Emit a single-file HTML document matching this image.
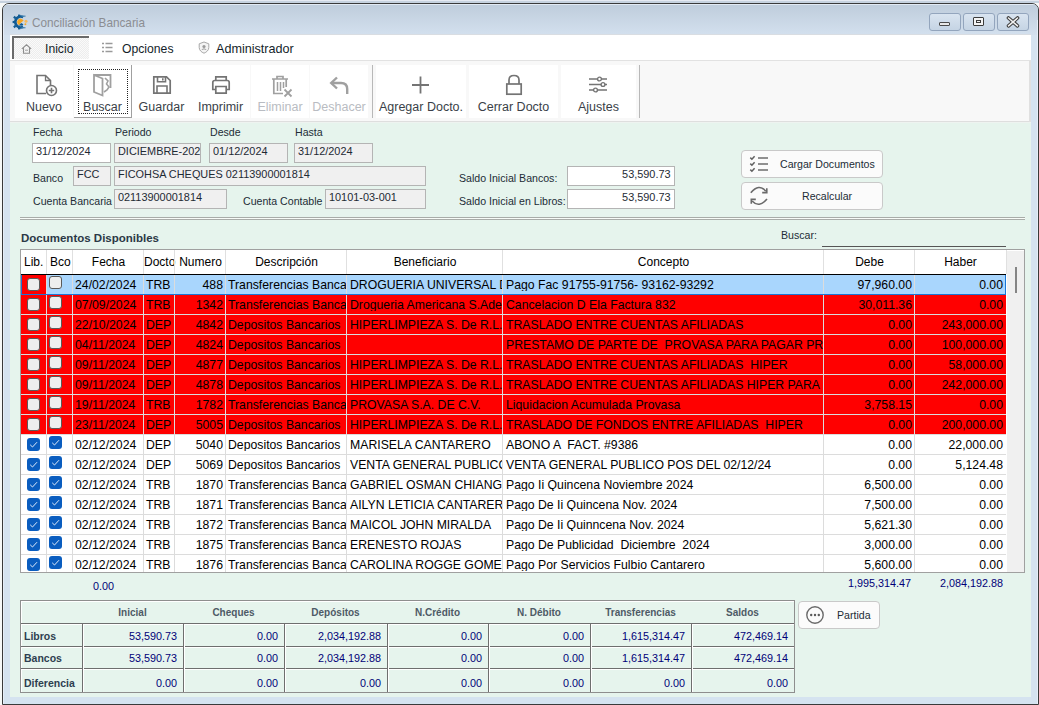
<!DOCTYPE html><html><head><meta charset="utf-8"><style>
*{box-sizing:border-box;margin:0;padding:0}
html,body{width:1039px;height:705px;overflow:hidden;background:#f7f9f8;font-family:"Liberation Sans",sans-serif;}
.ab{position:absolute}
.t{position:absolute;white-space:nowrap;line-height:1}
.lbl{position:absolute;white-space:nowrap;line-height:1;font-size:10.6px;color:#222c36}
.tb{position:absolute;border:1px solid #b4b4b4;background:#f0f0f0;overflow:hidden}
.tb span{position:absolute;white-space:nowrap;line-height:1;font-size:11.6px;color:#1e2a34}
.tbtn{position:absolute;top:65px;height:53px;background:#ffffff}
.tbl{position:absolute;top:101px;font-size:12.5px;line-height:1;white-space:nowrap;color:#3a3f48;text-align:center}
.cell{position:absolute;overflow:hidden;white-space:pre;line-height:1;font-size:12.25px;color:#000}
.cb{position:absolute;width:13px;height:13px;border-radius:3px}
.cbu{background:#eeeeee;border:1px solid #5a5a5a}
.cbc{background:#0a5dbf}
.sv{position:absolute;white-space:nowrap;line-height:1;font-size:10.8px;color:#000078;text-align:right}
.sh{position:absolute;white-space:nowrap;line-height:1;font-size:10px;font-weight:bold;color:#4e5a66;text-align:center}
.sl{position:absolute;white-space:nowrap;line-height:1;font-size:10.5px;font-weight:bold;color:#2e3e50}

</style></head><body>
<div class="ab" style="left:0;top:0;width:1039px;height:3px;background:linear-gradient(#e6eaf2 0 1px,#c6d2df 1px)"></div>
<div class="ab" style="left:2px;top:3px;width:1037px;height:702px;border:1px solid #3a3a3a;border-radius:7px 7px 0 0;background:#d5e3f0"></div>
<div class="ab" style="left:3px;top:4px;width:1035px;height:31px;border-radius:6px 6px 0 0;background:linear-gradient(#e2eaf4 0 1px,#bfcddc 1px,#d3e0ee)"></div>
<div class="ab" style="left:3px;top:20px;width:1px;height:684px;background:#e6eef8"></div>
<div class="ab" style="left:1037px;top:20px;width:1px;height:684px;background:#e6eef8"></div>
<svg class="ab" style="left:12px;top:14px" width="17" height="16" viewBox="0 0 17 16">
<path d="M11.2 3.2 A5.4 5.4 0 1 0 11.2 12.8" fill="none" stroke="#125c94" stroke-width="2.6"/>
<g fill="#125c94">
<rect x="6" y="0.6" width="2.2" height="2.4"/><rect x="6" y="13" width="2.2" height="2.4"/>
<rect x="0.6" y="6.9" width="2.4" height="2.2"/>
<rect x="1.6" y="2.3" width="2.2" height="2.2" transform="rotate(45 2.7 3.4)"/>
<rect x="1.6" y="11.5" width="2.2" height="2.2" transform="rotate(45 2.7 12.6)"/>
</g>
<path d="M7.3 11.2 A3.4 3.4 0 1 1 11.6 6.6 L8.6 9 Z" fill="#f5a623"/>
<path d="M6.8 11.6 L9.2 9 L11.4 10.2 L10.4 11.8 Z" fill="#125c94"/>
<rect x="9.5" y="1.6" width="4" height="1.1" fill="#3f7fb0"/><rect x="9.5" y="13.2" width="4" height="1.1" fill="#3f7fb0"/>
<circle cx="14" cy="7.2" r="1.5" fill="#f7b85a"/><circle cx="13.4" cy="10.3" r="1" fill="#f5a623"/>
</svg>
<div class="t" style="left:32px;top:17px;font-size:12.4px;color:#8b8d92;transform:scaleX(0.948);transform-origin:0 0">Conciliación Bancaria</div>
<div class="ab" style="left:929px;top:13px;width:32px;height:18px;border:1px solid #93a5bd;border-radius:3px;background:linear-gradient(#d9e4f0,#c5d4e4)"></div>
<div class="ab" style="left:963px;top:13px;width:32px;height:18px;border:1px solid #93a5bd;border-radius:3px;background:linear-gradient(#d9e4f0,#c5d4e4)"></div>
<div class="ab" style="left:997px;top:13px;width:32px;height:18px;border:1px solid #93a5bd;border-radius:3px;background:linear-gradient(#d9e4f0,#c5d4e4)"></div>
<div class="ab" style="left:939px;top:22px;width:11px;height:4px;border:1px solid #4a4a4a;border-radius:1px;background:#e8e8e8"></div>
<div class="ab" style="left:973px;top:17px;width:11px;height:9px;border:1px solid #3c3c3c;border-radius:1px;background:#f4f4f4"></div>
<div class="ab" style="left:976px;top:20px;width:5px;height:3px;border:1px solid #3c3c3c"></div>
<svg class="ab" style="left:1006px;top:16px" width="14" height="12" viewBox="0 0 14 12">
<path d="M2.5 2 L11.5 9.8 M11.5 2 L2.5 9.8" stroke="#3a3a3a" stroke-width="3.6" stroke-linecap="round"/>
<path d="M2.5 2 L11.5 9.8 M11.5 2 L2.5 9.8" stroke="#f2f2f2" stroke-width="1.6" stroke-linecap="round"/>
</svg>
<div class="ab" style="left:10px;top:34px;width:1021px;height:1px;background:#d9dde2"></div>
<div class="ab" style="left:10px;top:35px;width:1021px;height:26px;background:#fff;border-bottom:1px solid #e2e2e2"></div>
<div class="ab" style="left:12px;top:36px;width:77px;height:23px;border-top:2px solid #6a6a6a;border-left:2px solid #6a6a6a;background:repeating-conic-gradient(#ededed 0 25%,#fafafa 0 50%) 0 0/2px 2px"></div>
<svg class="ab" style="left:21px;top:44px" width="11" height="10" viewBox="0 0 11 10">
<path d="M0.8 4.8 L5.5 0.8 L10.2 4.8 M2.5 3.6 L2.5 9.2 L8.5 9.2 L8.5 3.6" stroke="#8e8e8e" stroke-width="1.1" fill="none"/><path d="M4 6.2 H7" stroke="#a0a0a0" stroke-width="1"/>
</svg>
<div class="t" style="left:45px;top:43px;font-size:12.2px;color:#141e2a">Inicio</div>
<svg class="ab" style="left:101px;top:42px" width="12" height="11" viewBox="0 0 12 11">
<path d="M1 1.5h2M1 5.5h2M1 9.5h2M4.5 1.5h7M4.5 5.5h7M4.5 9.5h7" stroke="#9a9a9a" stroke-width="1.3"/>
</svg>
<div class="t" style="left:122px;top:43px;font-size:12.2px;color:#141e2a">Opciones</div>
<svg class="ab" style="left:198px;top:41px" width="12" height="13" viewBox="0 0 12 13">
<path d="M6 1 L10.8 2.8 L10.8 6.5 C10.8 9.3 8.5 11.2 6 12.2 C3.5 11.2 1.2 9.3 1.2 6.5 L1.2 2.8 Z" fill="#f4f4f4" stroke="#a8a8a8" stroke-width="1"/>
<circle cx="6" cy="5.5" r="1.6" fill="#9a9a9a"/><path d="M3.8 9 C4.3 7.5 7.7 7.5 8.2 9" stroke="#9a9a9a" fill="none"/>
</svg>
<div class="t" style="left:216px;top:43px;font-size:12.6px;color:#141e2a">Administrador</div>
<div class="ab" style="left:10px;top:61px;width:1021px;height:61px;background:#f8f8f8;border-bottom:1px solid #dedede"></div>
<div class="ab" style="left:1029px;top:61px;width:2px;height:61px;background:#e0e0e0"></div>
<div class="tbtn" style="left:15px;width:58px"></div>
<div class="tbtn" style="left:74px;width:57px"></div>
<div class="tbtn" style="left:132px;width:59px"></div>
<div class="tbtn" style="left:191px;width:59px"></div>
<div class="tbtn" style="left:251px;width:58px"></div>
<div class="tbtn" style="left:310px;width:58px"></div>
<div class="tbtn" style="left:376px;width:90px"></div>
<div class="tbtn" style="left:469px;width:89px"></div>
<div class="tbtn" style="left:561px;width:75px"></div>
<div class="ab" style="left:74px;top:65px;width:58px;height:53px;background:#fff;border-right:1px solid #a0a0a0;border-bottom:1px solid #a0a0a0"></div>
<div class="ab" style="left:78px;top:69px;width:50px;height:45px;border:1px dotted #222"></div>
<div class="tbl" style="left:5px;width:78px;color:#3a3f48">Nuevo</div>
<div class="tbl" style="left:64px;width:77px;color:#3a3f48">Buscar</div>
<div class="tbl" style="left:122px;width:79px;color:#3a3f48">Guardar</div>
<div class="tbl" style="left:181px;width:79px;color:#3a3f48">Imprimir</div>
<div class="tbl" style="left:241px;width:78px;color:#b9bcc2">Eliminar</div>
<div class="tbl" style="left:300px;width:78px;color:#b9bcc2">Deshacer</div>
<div class="tbl" style="left:366px;width:110px;color:#3a3f48">Agregar Docto.</div>
<div class="tbl" style="left:459px;width:109px;color:#3a3f48">Cerrar Docto</div>
<div class="tbl" style="left:551px;width:95px;color:#3a3f48">Ajustes</div>
<div class="ab" style="left:372px;top:65px;width:1px;height:53px;background:#b8b8b8"></div>
<div class="ab" style="left:639px;top:65px;width:1px;height:53px;background:#b8b8b8"></div>
<svg class="ab" style="left:35px;top:74px" width="23" height="23" viewBox="0 0 23 23">
<path d="M11 19.5 L2 19.5 L2 1.5 L10.5 1.5 L15.5 6.5 L15.5 11" fill="none" stroke="#747474" stroke-width="1.6"/>
<path d="M10.5 1.5 L10.5 6.5 L15.5 6.5" fill="none" stroke="#747474" stroke-width="1.3"/>
<circle cx="16.5" cy="16.5" r="5" fill="#fff" stroke="#747474" stroke-width="1.6"/>
<path d="M16.5 13.8 V19.2 M13.8 16.5 H19.2" stroke="#747474" stroke-width="1.6"/>
</svg>
<svg class="ab" style="left:92px;top:73px" width="21" height="24" viewBox="0 0 21 24">
<path d="M2 2 L18.5 2 L18.5 15" fill="none" stroke="#a0a0a0" stroke-width="1.8"/>
<path d="M2 2 L2 19 L10.5 22.5 L10.5 5.5 Z" fill="none" stroke="#a0a0a0" stroke-width="1.8"/>
<path d="M13 5 L16 8 L14.5 11 L17 14 L15 17 L12 19" fill="none" stroke="#a0a0a0" stroke-width="1.6"/>
</svg>
<svg class="ab" style="left:152px;top:75px" width="20" height="20" viewBox="0 0 20 20">
<path d="M1.8 1.8 H14.5 L18.2 5.5 V18.2 H1.8 Z" fill="none" stroke="#747474" stroke-width="1.7"/>
<path d="M5.5 1.8 V6.8 H13.5 V1.8 M10.8 3.2 V5.5 M5 18.2 V11 H15 V18.2" fill="none" stroke="#747474" stroke-width="1.6"/>
</svg>
<svg class="ab" style="left:211px;top:75px" width="20" height="20" viewBox="0 0 20 20">
<path d="M4.8 5.5 V1.8 H15.2 V5.5" fill="none" stroke="#747474" stroke-width="1.7"/>
<path d="M4.5 14.5 H1.8 V7.5 Q1.8 5.5 3.8 5.5 H16.2 Q18.2 5.5 18.2 7.5 V14.5 H15.5" fill="none" stroke="#747474" stroke-width="1.7"/>
<path d="M4.8 11.5 H15.2 V18.2 H4.8 Z" fill="none" stroke="#747474" stroke-width="1.7"/>
</svg>
<svg class="ab" style="left:271px;top:75px" width="23" height="23" viewBox="0 0 23 23">
<path d="M1 4 H17 M6 4 V1.5 H12 V4 M2.8 4 V18.5 H12 M15.2 4 V12" fill="none" stroke="#a0a0a0" stroke-width="1.7"/>
<path d="M6.5 7 V16 M9.5 7 V16 M12.5 7 V13" stroke="#a0a0a0" stroke-width="1.5"/>
<path d="M13.5 14.5 L20.5 21.5 M20.5 14.5 L13.5 21.5" stroke="#a0a0a0" stroke-width="1.8"/>
</svg>
<svg class="ab" style="left:329px;top:76px" width="21" height="19" viewBox="0 0 21 19">
<path d="M8 1.5 L2.2 7 L8 12.5" fill="none" stroke="#a0a0a0" stroke-width="2.4"/>
<path d="M2.5 7 H12 Q18.2 7 18.2 13 V18" fill="none" stroke="#a0a0a0" stroke-width="2.4"/>
</svg>
<svg class="ab" style="left:411px;top:76px" width="19" height="18" viewBox="0 0 19 18">
<path d="M9.5 0.5 V17.5 M1 9 H18" stroke="#747474" stroke-width="1.8"/>
</svg>
<svg class="ab" style="left:505px;top:74px" width="18" height="22" viewBox="0 0 18 22">
<path d="M4 10 V6 Q4 1.5 9 1.5 Q14 1.5 14 6 V10" fill="none" stroke="#747474" stroke-width="1.7"/>
<rect x="1.8" y="10" width="14.4" height="10.2" fill="none" stroke="#747474" stroke-width="1.7"/>
</svg>
<svg class="ab" style="left:588px;top:76px" width="21" height="17" viewBox="0 0 21 17">
<path d="M1 3 H19 M1 8.5 H19 M1 14 H19" stroke="#747474" stroke-width="1.7"/>
<circle cx="11.5" cy="3" r="1.9" fill="#fff" stroke="#747474" stroke-width="1.4"/>
<circle cx="15" cy="8.5" r="1.9" fill="#fff" stroke="#747474" stroke-width="1.4"/>
<circle cx="7.5" cy="14" r="1.9" fill="#fff" stroke="#747474" stroke-width="1.4"/>
</svg>
<div class="ab" style="left:10px;top:122px;width:1021px;height:575px;background:#e6f4ed"></div>
<div class="ab" style="left:10px;top:122px;width:1021px;height:1px;background:#eef3f0"></div>
<div class="lbl" style="left:33px;top:127px">Fecha</div>
<div class="lbl" style="left:115px;top:127px">Periodo</div>
<div class="lbl" style="left:210px;top:127px">Desde</div>
<div class="lbl" style="left:295px;top:127px">Hasta</div>
<div class="lbl" style="left:33px;top:173px">Banco</div>
<div class="lbl" style="left:33px;top:196px">Cuenta Bancaria</div>
<div class="lbl" style="left:243px;top:196px">Cuenta Contable</div>
<div class="lbl" style="left:459px;top:173px">Saldo Inicial Bancos:</div>
<div class="lbl" style="left:459px;top:196px">Saldo Inicial en Libros:</div>
<div class="tb" style="left:32px;top:143px;width:79px;height:20px;background:#ffffff"><span style="left:3px;top:1px;transform:scaleX(0.94);transform-origin:0 0">31/12/2024</span></div>
<div class="tb" style="left:114px;top:143px;width:87px;height:20px;background:#f0f0f0"><span style="left:3px;top:1px;transform:scaleX(0.94);transform-origin:0 0">DICIEMBRE-2024</span></div>
<div class="tb" style="left:209px;top:143px;width:79px;height:20px;background:#f0f0f0"><span style="left:3px;top:1px;transform:scaleX(0.94);transform-origin:0 0">01/12/2024</span></div>
<div class="tb" style="left:294px;top:143px;width:79px;height:20px;background:#f0f0f0"><span style="left:3px;top:1px;transform:scaleX(0.94);transform-origin:0 0">31/12/2024</span></div>
<div class="tb" style="left:73px;top:166px;width:38px;height:20px;background:#f0f0f0"><span style="left:3px;top:1px;transform:scaleX(0.94);transform-origin:0 0">FCC</span></div>
<div class="tb" style="left:114px;top:166px;width:312px;height:20px;background:#f0f0f0"><span style="left:3px;top:1px;transform:scaleX(0.94);transform-origin:0 0">FICOHSA CHEQUES 02113900001814</span></div>
<div class="tb" style="left:114px;top:189px;width:113px;height:20px;background:#f0f0f0"><span style="left:3px;top:1px;transform:scaleX(0.94);transform-origin:0 0">02113900001814</span></div>
<div class="tb" style="left:325px;top:189px;width:101px;height:20px;background:#f0f0f0"><span style="left:3px;top:1px;transform:scaleX(0.94);transform-origin:0 0">10101-03-001</span></div>
<div class="tb" style="left:567px;top:166px;width:108px;height:20px;background:#ffffff"><span style="right:3px;top:1px;transform:scaleX(0.94);transform-origin:100% 0">53,590.73</span></div>
<div class="tb" style="left:567px;top:189px;width:108px;height:20px;background:#ffffff"><span style="right:3px;top:1px;transform:scaleX(0.94);transform-origin:100% 0">53,590.73</span></div>
<div class="ab" style="left:741px;top:150px;width:142px;height:28px;border:1px solid #c9c9c9;border-radius:4px;background:#fbfbfb"></div>
<div class="ab" style="left:741px;top:182px;width:142px;height:28px;border:1px solid #c9c9c9;border-radius:4px;background:#fbfbfb"></div>
<div class="lbl" style="left:780px;top:159px">Cargar Documentos</div>
<div class="lbl" style="left:802px;top:191px">Recalcular</div>
<svg class="ab" style="left:749px;top:155px" width="20" height="18" viewBox="0 0 20 18">
<path d="M1.3 2.6 L2.9 4.2 L5.6 1.2 M1.3 8.6 L2.9 10.2 L5.6 7.2 M1.3 14.6 L2.9 16.2 L5.6 13.2" fill="none" stroke="#606060" stroke-width="1.5"/>
<path d="M9 3 H19 M9 9 H19 M9 15 H19" stroke="#6e6e6e" stroke-width="1.7"/>
</svg>
<svg class="ab" style="left:749px;top:185px" width="21" height="22" viewBox="0 0 21 22">
<path d="M1.8 7.8 Q10 -2 16.8 6.2" fill="none" stroke="#6a6a6a" stroke-width="1.6"/>
<path d="M17.8 3.2 V7.6 H13.2" fill="none" stroke="#6a6a6a" stroke-width="1.6"/>
<path d="M18 14 Q10 23.5 3.1 16" fill="none" stroke="#6a6a6a" stroke-width="1.6"/>
<path d="M2.3 18.8 V14.4 H6.8" fill="none" stroke="#6a6a6a" stroke-width="1.6"/>
</svg>
<div class="ab" style="left:20px;top:217px;width:1005px;height:1px;background:#a8aca8"></div>
<div class="ab" style="left:20px;top:218px;width:1005px;height:1px;background:#f8fcf8"></div>
<div class="ab" style="left:20px;top:219px;width:1005px;height:1px;background:#a8aca8"></div>
<div class="t" style="left:21px;top:233px;font-size:11.5px;font-weight:bold;color:#2b3846">Documentos Disponibles</div>
<div class="lbl" style="left:781px;top:230px">Buscar:</div>
<div class="ab" style="left:822px;top:246px;width:184px;height:1px;background:#555"></div>
<div class="ab" style="left:20px;top:249px;width:1005px;height:324px;border:1px solid #a0a0a0;background:#fff;overflow:hidden">
<div class="ab" style="left:985px;top:0px;width:18px;height:322px;background:#f0f0f0;border-left:1px solid #fff;border-top:1px solid #fff"></div>
<div class="ab" style="left:994px;top:17px;width:2px;height:26px;background:#858585"></div>
<div class="cell" style="left:3px;top:6px;width:29px;font-size:12px;overflow:visible">Lib.</div>
<div class="cell" style="left:29px;top:6px;width:29px;font-size:12px;overflow:visible">Bco</div>
<div class="cell" style="left:52px;top:6px;width:71px;text-align:center;font-size:12px;overflow:visible">Fecha</div>
<div class="cell" style="left:123px;top:6px;width:34px;font-size:12px;overflow:visible">Docto</div>
<div class="cell" style="left:154px;top:6px;width:51px;text-align:center;font-size:12px;overflow:visible">Numero</div>
<div class="cell" style="left:205px;top:6px;width:121px;text-align:center;font-size:12px;overflow:visible">Descripción</div>
<div class="cell" style="left:326px;top:6px;width:156px;text-align:center;font-size:12px;overflow:visible">Beneficiario</div>
<div class="cell" style="left:482px;top:6px;width:321px;text-align:center;font-size:12px;overflow:visible">Concepto</div>
<div class="cell" style="left:803px;top:6px;width:91px;text-align:center;font-size:12px;overflow:visible">Debe</div>
<div class="cell" style="left:894px;top:6px;width:91px;text-align:center;font-size:12px;overflow:visible">Haber</div>
<div class="ab" style="left:25px;top:0;width:1px;height:24px;background:#e0e0e0"></div>
<div class="ab" style="left:51px;top:0;width:1px;height:24px;background:#e0e0e0"></div>
<div class="ab" style="left:122px;top:0;width:1px;height:24px;background:#e0e0e0"></div>
<div class="ab" style="left:153px;top:0;width:1px;height:24px;background:#e0e0e0"></div>
<div class="ab" style="left:204px;top:0;width:1px;height:24px;background:#e0e0e0"></div>
<div class="ab" style="left:325px;top:0;width:1px;height:24px;background:#e0e0e0"></div>
<div class="ab" style="left:481px;top:0;width:1px;height:24px;background:#e0e0e0"></div>
<div class="ab" style="left:802px;top:0;width:1px;height:24px;background:#e0e0e0"></div>
<div class="ab" style="left:893px;top:0;width:1px;height:24px;background:#e0e0e0"></div>
<div class="ab" style="left:985px;top:0;width:1px;height:24px;background:#e0e0e0"></div>
<div class="ab" style="left:0;top:25px;width:985px;height:19px;background:#a9d6fd"></div>
<div class="ab" style="left:0;top:25px;width:25px;height:19px;background:#ff0000"></div>
<div class="ab" style="left:0;top:44px;width:985px;height:1px;background:#dcdcdc"></div>
<div class="ab" style="left:25px;top:25px;width:1px;height:19px;background:#dcdcdc"></div>
<div class="ab" style="left:51px;top:25px;width:1px;height:19px;background:#dcdcdc"></div>
<div class="ab" style="left:122px;top:25px;width:1px;height:19px;background:#dcdcdc"></div>
<div class="ab" style="left:153px;top:25px;width:1px;height:19px;background:#dcdcdc"></div>
<div class="ab" style="left:204px;top:25px;width:1px;height:19px;background:#dcdcdc"></div>
<div class="ab" style="left:325px;top:25px;width:1px;height:19px;background:#dcdcdc"></div>
<div class="ab" style="left:481px;top:25px;width:1px;height:19px;background:#dcdcdc"></div>
<div class="ab" style="left:802px;top:25px;width:1px;height:19px;background:#dcdcdc"></div>
<div class="ab" style="left:893px;top:25px;width:1px;height:19px;background:#dcdcdc"></div>
<div class="cb cbu" style="left:6px;top:28px"></div>
<div class="cb cbu" style="left:28px;top:26px"></div>
<div class="cell" style="left:52px;top:29px;width:70px;padding-left:2px">24/02/2024</div>
<div class="cell" style="left:123px;top:29px;width:30px;padding-left:2px">TRB</div>
<div class="cell" style="left:154px;top:29px;width:50px;padding-right:2px;text-align:right">488</div>
<div class="cell" style="left:205px;top:29px;width:120px;padding-left:2px">Transferencias Bancarias</div>
<div class="cell" style="left:326px;top:29px;width:155px;padding-left:3px">DROGUERIA UNIVERSAL DE HONDURAS</div>
<div class="cell" style="left:482px;top:29px;width:320px;padding-left:3px">Pago Fac 91755-91756- 93162-93292</div>
<div class="cell" style="left:803px;top:29px;width:90px;padding-right:2px;text-align:right">97,960.00</div>
<div class="cell" style="left:894px;top:29px;width:90px;padding-right:2px;text-align:right">0.00</div>
<div class="ab" style="left:0;top:45px;width:985px;height:19px;background:#ff0000"></div>
<div class="ab" style="left:0;top:64px;width:985px;height:1px;background:#dcdcdc"></div>
<div class="ab" style="left:25px;top:45px;width:1px;height:19px;background:#dcdcdc"></div>
<div class="ab" style="left:51px;top:45px;width:1px;height:19px;background:#dcdcdc"></div>
<div class="ab" style="left:122px;top:45px;width:1px;height:19px;background:#dcdcdc"></div>
<div class="ab" style="left:153px;top:45px;width:1px;height:19px;background:#dcdcdc"></div>
<div class="ab" style="left:204px;top:45px;width:1px;height:19px;background:#dcdcdc"></div>
<div class="ab" style="left:325px;top:45px;width:1px;height:19px;background:#dcdcdc"></div>
<div class="ab" style="left:481px;top:45px;width:1px;height:19px;background:#dcdcdc"></div>
<div class="ab" style="left:802px;top:45px;width:1px;height:19px;background:#dcdcdc"></div>
<div class="ab" style="left:893px;top:45px;width:1px;height:19px;background:#dcdcdc"></div>
<div class="cb cbu" style="left:6px;top:48px"></div>
<div class="cb cbu" style="left:28px;top:46px"></div>
<div class="cell" style="left:52px;top:49px;width:70px;padding-left:2px">07/09/2024</div>
<div class="cell" style="left:123px;top:49px;width:30px;padding-left:2px">TRB</div>
<div class="cell" style="left:154px;top:49px;width:50px;padding-right:2px;text-align:right">1342</div>
<div class="cell" style="left:205px;top:49px;width:120px;padding-left:2px">Transferencias Bancarias</div>
<div class="cell" style="left:326px;top:49px;width:155px;padding-left:3px">Drogueria Americana S.Ade C.V.</div>
<div class="cell" style="left:482px;top:49px;width:320px;padding-left:3px">Cancelacion D Ela Factura 832</div>
<div class="cell" style="left:803px;top:49px;width:90px;padding-right:2px;text-align:right">30,011.36</div>
<div class="cell" style="left:894px;top:49px;width:90px;padding-right:2px;text-align:right">0.00</div>
<div class="ab" style="left:0;top:65px;width:985px;height:19px;background:#ff0000"></div>
<div class="ab" style="left:0;top:84px;width:985px;height:1px;background:#dcdcdc"></div>
<div class="ab" style="left:25px;top:65px;width:1px;height:19px;background:#dcdcdc"></div>
<div class="ab" style="left:51px;top:65px;width:1px;height:19px;background:#dcdcdc"></div>
<div class="ab" style="left:122px;top:65px;width:1px;height:19px;background:#dcdcdc"></div>
<div class="ab" style="left:153px;top:65px;width:1px;height:19px;background:#dcdcdc"></div>
<div class="ab" style="left:204px;top:65px;width:1px;height:19px;background:#dcdcdc"></div>
<div class="ab" style="left:325px;top:65px;width:1px;height:19px;background:#dcdcdc"></div>
<div class="ab" style="left:481px;top:65px;width:1px;height:19px;background:#dcdcdc"></div>
<div class="ab" style="left:802px;top:65px;width:1px;height:19px;background:#dcdcdc"></div>
<div class="ab" style="left:893px;top:65px;width:1px;height:19px;background:#dcdcdc"></div>
<div class="cb cbu" style="left:6px;top:68px"></div>
<div class="cb cbu" style="left:28px;top:66px"></div>
<div class="cell" style="left:52px;top:69px;width:70px;padding-left:2px">22/10/2024</div>
<div class="cell" style="left:123px;top:69px;width:30px;padding-left:2px">DEP</div>
<div class="cell" style="left:154px;top:69px;width:50px;padding-right:2px;text-align:right">4842</div>
<div class="cell" style="left:205px;top:69px;width:120px;padding-left:2px">Depositos Bancarios</div>
<div class="cell" style="left:326px;top:69px;width:155px;padding-left:3px">HIPERLIMPIEZA S. De R.L. De C.V.</div>
<div class="cell" style="left:482px;top:69px;width:320px;padding-left:3px">TRASLADO ENTRE CUENTAS AFILIADAS</div>
<div class="cell" style="left:803px;top:69px;width:90px;padding-right:2px;text-align:right">0.00</div>
<div class="cell" style="left:894px;top:69px;width:90px;padding-right:2px;text-align:right">243,000.00</div>
<div class="ab" style="left:0;top:85px;width:985px;height:19px;background:#ff0000"></div>
<div class="ab" style="left:0;top:104px;width:985px;height:1px;background:#dcdcdc"></div>
<div class="ab" style="left:25px;top:85px;width:1px;height:19px;background:#dcdcdc"></div>
<div class="ab" style="left:51px;top:85px;width:1px;height:19px;background:#dcdcdc"></div>
<div class="ab" style="left:122px;top:85px;width:1px;height:19px;background:#dcdcdc"></div>
<div class="ab" style="left:153px;top:85px;width:1px;height:19px;background:#dcdcdc"></div>
<div class="ab" style="left:204px;top:85px;width:1px;height:19px;background:#dcdcdc"></div>
<div class="ab" style="left:325px;top:85px;width:1px;height:19px;background:#dcdcdc"></div>
<div class="ab" style="left:481px;top:85px;width:1px;height:19px;background:#dcdcdc"></div>
<div class="ab" style="left:802px;top:85px;width:1px;height:19px;background:#dcdcdc"></div>
<div class="ab" style="left:893px;top:85px;width:1px;height:19px;background:#dcdcdc"></div>
<div class="cb cbu" style="left:6px;top:88px"></div>
<div class="cb cbu" style="left:28px;top:86px"></div>
<div class="cell" style="left:52px;top:89px;width:70px;padding-left:2px">04/11/2024</div>
<div class="cell" style="left:123px;top:89px;width:30px;padding-left:2px">DEP</div>
<div class="cell" style="left:154px;top:89px;width:50px;padding-right:2px;text-align:right">4824</div>
<div class="cell" style="left:205px;top:89px;width:120px;padding-left:2px">Depositos Bancarios</div>
<div class="cell" style="left:326px;top:89px;width:155px;padding-left:3px"></div>
<div class="cell" style="left:482px;top:89px;width:320px;padding-left:3px">PRESTAMO DE PARTE DE  PROVASA PARA PAGAR PROVEEDORES</div>
<div class="cell" style="left:803px;top:89px;width:90px;padding-right:2px;text-align:right">0.00</div>
<div class="cell" style="left:894px;top:89px;width:90px;padding-right:2px;text-align:right">100,000.00</div>
<div class="ab" style="left:0;top:105px;width:985px;height:19px;background:#ff0000"></div>
<div class="ab" style="left:0;top:124px;width:985px;height:1px;background:#dcdcdc"></div>
<div class="ab" style="left:25px;top:105px;width:1px;height:19px;background:#dcdcdc"></div>
<div class="ab" style="left:51px;top:105px;width:1px;height:19px;background:#dcdcdc"></div>
<div class="ab" style="left:122px;top:105px;width:1px;height:19px;background:#dcdcdc"></div>
<div class="ab" style="left:153px;top:105px;width:1px;height:19px;background:#dcdcdc"></div>
<div class="ab" style="left:204px;top:105px;width:1px;height:19px;background:#dcdcdc"></div>
<div class="ab" style="left:325px;top:105px;width:1px;height:19px;background:#dcdcdc"></div>
<div class="ab" style="left:481px;top:105px;width:1px;height:19px;background:#dcdcdc"></div>
<div class="ab" style="left:802px;top:105px;width:1px;height:19px;background:#dcdcdc"></div>
<div class="ab" style="left:893px;top:105px;width:1px;height:19px;background:#dcdcdc"></div>
<div class="cb cbu" style="left:6px;top:108px"></div>
<div class="cb cbu" style="left:28px;top:106px"></div>
<div class="cell" style="left:52px;top:109px;width:70px;padding-left:2px">09/11/2024</div>
<div class="cell" style="left:123px;top:109px;width:30px;padding-left:2px">DEP</div>
<div class="cell" style="left:154px;top:109px;width:50px;padding-right:2px;text-align:right">4877</div>
<div class="cell" style="left:205px;top:109px;width:120px;padding-left:2px">Depositos Bancarios</div>
<div class="cell" style="left:326px;top:109px;width:155px;padding-left:3px">HIPERLIMPIEZA S. De R.L. De C.V.</div>
<div class="cell" style="left:482px;top:109px;width:320px;padding-left:3px">TRASLADO ENTRE CUENTAS AFILIADAS  HIPER</div>
<div class="cell" style="left:803px;top:109px;width:90px;padding-right:2px;text-align:right">0.00</div>
<div class="cell" style="left:894px;top:109px;width:90px;padding-right:2px;text-align:right">58,000.00</div>
<div class="ab" style="left:0;top:125px;width:985px;height:19px;background:#ff0000"></div>
<div class="ab" style="left:0;top:144px;width:985px;height:1px;background:#dcdcdc"></div>
<div class="ab" style="left:25px;top:125px;width:1px;height:19px;background:#dcdcdc"></div>
<div class="ab" style="left:51px;top:125px;width:1px;height:19px;background:#dcdcdc"></div>
<div class="ab" style="left:122px;top:125px;width:1px;height:19px;background:#dcdcdc"></div>
<div class="ab" style="left:153px;top:125px;width:1px;height:19px;background:#dcdcdc"></div>
<div class="ab" style="left:204px;top:125px;width:1px;height:19px;background:#dcdcdc"></div>
<div class="ab" style="left:325px;top:125px;width:1px;height:19px;background:#dcdcdc"></div>
<div class="ab" style="left:481px;top:125px;width:1px;height:19px;background:#dcdcdc"></div>
<div class="ab" style="left:802px;top:125px;width:1px;height:19px;background:#dcdcdc"></div>
<div class="ab" style="left:893px;top:125px;width:1px;height:19px;background:#dcdcdc"></div>
<div class="cb cbu" style="left:6px;top:128px"></div>
<div class="cb cbu" style="left:28px;top:126px"></div>
<div class="cell" style="left:52px;top:129px;width:70px;padding-left:2px">09/11/2024</div>
<div class="cell" style="left:123px;top:129px;width:30px;padding-left:2px">DEP</div>
<div class="cell" style="left:154px;top:129px;width:50px;padding-right:2px;text-align:right">4878</div>
<div class="cell" style="left:205px;top:129px;width:120px;padding-left:2px">Depositos Bancarios</div>
<div class="cell" style="left:326px;top:129px;width:155px;padding-left:3px">HIPERLIMPIEZA S. De R.L. De C.V.</div>
<div class="cell" style="left:482px;top:129px;width:320px;padding-left:3px">TRASLADO ENTRE CUENTAS AFILIADAS HIPER PARA PAGO</div>
<div class="cell" style="left:803px;top:129px;width:90px;padding-right:2px;text-align:right">0.00</div>
<div class="cell" style="left:894px;top:129px;width:90px;padding-right:2px;text-align:right">242,000.00</div>
<div class="ab" style="left:0;top:145px;width:985px;height:19px;background:#ff0000"></div>
<div class="ab" style="left:0;top:164px;width:985px;height:1px;background:#dcdcdc"></div>
<div class="ab" style="left:25px;top:145px;width:1px;height:19px;background:#dcdcdc"></div>
<div class="ab" style="left:51px;top:145px;width:1px;height:19px;background:#dcdcdc"></div>
<div class="ab" style="left:122px;top:145px;width:1px;height:19px;background:#dcdcdc"></div>
<div class="ab" style="left:153px;top:145px;width:1px;height:19px;background:#dcdcdc"></div>
<div class="ab" style="left:204px;top:145px;width:1px;height:19px;background:#dcdcdc"></div>
<div class="ab" style="left:325px;top:145px;width:1px;height:19px;background:#dcdcdc"></div>
<div class="ab" style="left:481px;top:145px;width:1px;height:19px;background:#dcdcdc"></div>
<div class="ab" style="left:802px;top:145px;width:1px;height:19px;background:#dcdcdc"></div>
<div class="ab" style="left:893px;top:145px;width:1px;height:19px;background:#dcdcdc"></div>
<div class="cb cbu" style="left:6px;top:148px"></div>
<div class="cb cbu" style="left:28px;top:146px"></div>
<div class="cell" style="left:52px;top:149px;width:70px;padding-left:2px">19/11/2024</div>
<div class="cell" style="left:123px;top:149px;width:30px;padding-left:2px">TRB</div>
<div class="cell" style="left:154px;top:149px;width:50px;padding-right:2px;text-align:right">1782</div>
<div class="cell" style="left:205px;top:149px;width:120px;padding-left:2px">Transferencias Bancarias</div>
<div class="cell" style="left:326px;top:149px;width:155px;padding-left:3px">PROVASA S.A. DE C.V.</div>
<div class="cell" style="left:482px;top:149px;width:320px;padding-left:3px">Liquidacion Acumulada Provasa</div>
<div class="cell" style="left:803px;top:149px;width:90px;padding-right:2px;text-align:right">3,758.15</div>
<div class="cell" style="left:894px;top:149px;width:90px;padding-right:2px;text-align:right">0.00</div>
<div class="ab" style="left:0;top:165px;width:985px;height:19px;background:#ff0000"></div>
<div class="ab" style="left:0;top:184px;width:985px;height:1px;background:#dcdcdc"></div>
<div class="ab" style="left:25px;top:165px;width:1px;height:19px;background:#dcdcdc"></div>
<div class="ab" style="left:51px;top:165px;width:1px;height:19px;background:#dcdcdc"></div>
<div class="ab" style="left:122px;top:165px;width:1px;height:19px;background:#dcdcdc"></div>
<div class="ab" style="left:153px;top:165px;width:1px;height:19px;background:#dcdcdc"></div>
<div class="ab" style="left:204px;top:165px;width:1px;height:19px;background:#dcdcdc"></div>
<div class="ab" style="left:325px;top:165px;width:1px;height:19px;background:#dcdcdc"></div>
<div class="ab" style="left:481px;top:165px;width:1px;height:19px;background:#dcdcdc"></div>
<div class="ab" style="left:802px;top:165px;width:1px;height:19px;background:#dcdcdc"></div>
<div class="ab" style="left:893px;top:165px;width:1px;height:19px;background:#dcdcdc"></div>
<div class="cb cbu" style="left:6px;top:168px"></div>
<div class="cb cbu" style="left:28px;top:166px"></div>
<div class="cell" style="left:52px;top:169px;width:70px;padding-left:2px">23/11/2024</div>
<div class="cell" style="left:123px;top:169px;width:30px;padding-left:2px">DEP</div>
<div class="cell" style="left:154px;top:169px;width:50px;padding-right:2px;text-align:right">5005</div>
<div class="cell" style="left:205px;top:169px;width:120px;padding-left:2px">Depositos Bancarios</div>
<div class="cell" style="left:326px;top:169px;width:155px;padding-left:3px">HIPERLIMPIEZA S. De R.L. De C.V.</div>
<div class="cell" style="left:482px;top:169px;width:320px;padding-left:3px">TRASLADO DE FONDOS ENTRE AFILIADAS  HIPER</div>
<div class="cell" style="left:803px;top:169px;width:90px;padding-right:2px;text-align:right">0.00</div>
<div class="cell" style="left:894px;top:169px;width:90px;padding-right:2px;text-align:right">200,000.00</div>
<div class="ab" style="left:0;top:185px;width:985px;height:19px;background:#ffffff"></div>
<div class="ab" style="left:0;top:204px;width:985px;height:1px;background:#dcdcdc"></div>
<div class="ab" style="left:25px;top:185px;width:1px;height:19px;background:#dcdcdc"></div>
<div class="ab" style="left:51px;top:185px;width:1px;height:19px;background:#dcdcdc"></div>
<div class="ab" style="left:122px;top:185px;width:1px;height:19px;background:#dcdcdc"></div>
<div class="ab" style="left:153px;top:185px;width:1px;height:19px;background:#dcdcdc"></div>
<div class="ab" style="left:204px;top:185px;width:1px;height:19px;background:#dcdcdc"></div>
<div class="ab" style="left:325px;top:185px;width:1px;height:19px;background:#dcdcdc"></div>
<div class="ab" style="left:481px;top:185px;width:1px;height:19px;background:#dcdcdc"></div>
<div class="ab" style="left:802px;top:185px;width:1px;height:19px;background:#dcdcdc"></div>
<div class="ab" style="left:893px;top:185px;width:1px;height:19px;background:#dcdcdc"></div>
<div class="cb cbc" style="left:6px;top:188px"><svg width="13" height="13" viewBox="0 0 13 13" style="position:absolute;left:0;top:0"><path d="M3.2 6.8 L5.5 9 L10 4.2" fill="none" stroke="#f4f8ff" stroke-width="0.9"/></svg></div>
<div class="cb cbc" style="left:28px;top:186px"><svg width="13" height="13" viewBox="0 0 13 13" style="position:absolute;left:0;top:0"><path d="M3.2 6.8 L5.5 9 L10 4.2" fill="none" stroke="#f4f8ff" stroke-width="0.9"/></svg></div>
<div class="cell" style="left:52px;top:189px;width:70px;padding-left:2px">02/12/2024</div>
<div class="cell" style="left:123px;top:189px;width:30px;padding-left:2px">DEP</div>
<div class="cell" style="left:154px;top:189px;width:50px;padding-right:2px;text-align:right">5040</div>
<div class="cell" style="left:205px;top:189px;width:120px;padding-left:2px">Depositos Bancarios</div>
<div class="cell" style="left:326px;top:189px;width:155px;padding-left:3px">MARISELA CANTARERO</div>
<div class="cell" style="left:482px;top:189px;width:320px;padding-left:3px">ABONO A  FACT. #9386</div>
<div class="cell" style="left:803px;top:189px;width:90px;padding-right:2px;text-align:right">0.00</div>
<div class="cell" style="left:894px;top:189px;width:90px;padding-right:2px;text-align:right">22,000.00</div>
<div class="ab" style="left:0;top:205px;width:985px;height:19px;background:#ffffff"></div>
<div class="ab" style="left:0;top:224px;width:985px;height:1px;background:#dcdcdc"></div>
<div class="ab" style="left:25px;top:205px;width:1px;height:19px;background:#dcdcdc"></div>
<div class="ab" style="left:51px;top:205px;width:1px;height:19px;background:#dcdcdc"></div>
<div class="ab" style="left:122px;top:205px;width:1px;height:19px;background:#dcdcdc"></div>
<div class="ab" style="left:153px;top:205px;width:1px;height:19px;background:#dcdcdc"></div>
<div class="ab" style="left:204px;top:205px;width:1px;height:19px;background:#dcdcdc"></div>
<div class="ab" style="left:325px;top:205px;width:1px;height:19px;background:#dcdcdc"></div>
<div class="ab" style="left:481px;top:205px;width:1px;height:19px;background:#dcdcdc"></div>
<div class="ab" style="left:802px;top:205px;width:1px;height:19px;background:#dcdcdc"></div>
<div class="ab" style="left:893px;top:205px;width:1px;height:19px;background:#dcdcdc"></div>
<div class="cb cbc" style="left:6px;top:208px"><svg width="13" height="13" viewBox="0 0 13 13" style="position:absolute;left:0;top:0"><path d="M3.2 6.8 L5.5 9 L10 4.2" fill="none" stroke="#f4f8ff" stroke-width="0.9"/></svg></div>
<div class="cb cbc" style="left:28px;top:206px"><svg width="13" height="13" viewBox="0 0 13 13" style="position:absolute;left:0;top:0"><path d="M3.2 6.8 L5.5 9 L10 4.2" fill="none" stroke="#f4f8ff" stroke-width="0.9"/></svg></div>
<div class="cell" style="left:52px;top:209px;width:70px;padding-left:2px">02/12/2024</div>
<div class="cell" style="left:123px;top:209px;width:30px;padding-left:2px">DEP</div>
<div class="cell" style="left:154px;top:209px;width:50px;padding-right:2px;text-align:right">5069</div>
<div class="cell" style="left:205px;top:209px;width:120px;padding-left:2px">Depositos Bancarios</div>
<div class="cell" style="left:326px;top:209px;width:155px;padding-left:3px">VENTA GENERAL PUBLICO</div>
<div class="cell" style="left:482px;top:209px;width:320px;padding-left:3px">VENTA GENERAL PUBLICO POS DEL 02/12/24</div>
<div class="cell" style="left:803px;top:209px;width:90px;padding-right:2px;text-align:right">0.00</div>
<div class="cell" style="left:894px;top:209px;width:90px;padding-right:2px;text-align:right">5,124.48</div>
<div class="ab" style="left:0;top:225px;width:985px;height:19px;background:#ffffff"></div>
<div class="ab" style="left:0;top:244px;width:985px;height:1px;background:#dcdcdc"></div>
<div class="ab" style="left:25px;top:225px;width:1px;height:19px;background:#dcdcdc"></div>
<div class="ab" style="left:51px;top:225px;width:1px;height:19px;background:#dcdcdc"></div>
<div class="ab" style="left:122px;top:225px;width:1px;height:19px;background:#dcdcdc"></div>
<div class="ab" style="left:153px;top:225px;width:1px;height:19px;background:#dcdcdc"></div>
<div class="ab" style="left:204px;top:225px;width:1px;height:19px;background:#dcdcdc"></div>
<div class="ab" style="left:325px;top:225px;width:1px;height:19px;background:#dcdcdc"></div>
<div class="ab" style="left:481px;top:225px;width:1px;height:19px;background:#dcdcdc"></div>
<div class="ab" style="left:802px;top:225px;width:1px;height:19px;background:#dcdcdc"></div>
<div class="ab" style="left:893px;top:225px;width:1px;height:19px;background:#dcdcdc"></div>
<div class="cb cbc" style="left:6px;top:228px"><svg width="13" height="13" viewBox="0 0 13 13" style="position:absolute;left:0;top:0"><path d="M3.2 6.8 L5.5 9 L10 4.2" fill="none" stroke="#f4f8ff" stroke-width="0.9"/></svg></div>
<div class="cb cbc" style="left:28px;top:226px"><svg width="13" height="13" viewBox="0 0 13 13" style="position:absolute;left:0;top:0"><path d="M3.2 6.8 L5.5 9 L10 4.2" fill="none" stroke="#f4f8ff" stroke-width="0.9"/></svg></div>
<div class="cell" style="left:52px;top:229px;width:70px;padding-left:2px">02/12/2024</div>
<div class="cell" style="left:123px;top:229px;width:30px;padding-left:2px">TRB</div>
<div class="cell" style="left:154px;top:229px;width:50px;padding-right:2px;text-align:right">1870</div>
<div class="cell" style="left:205px;top:229px;width:120px;padding-left:2px">Transferencias Bancarias</div>
<div class="cell" style="left:326px;top:229px;width:155px;padding-left:3px">GABRIEL OSMAN CHIANG ESPINAL</div>
<div class="cell" style="left:482px;top:229px;width:320px;padding-left:3px">Pago Ii Quincena Noviembre 2024</div>
<div class="cell" style="left:803px;top:229px;width:90px;padding-right:2px;text-align:right">6,500.00</div>
<div class="cell" style="left:894px;top:229px;width:90px;padding-right:2px;text-align:right">0.00</div>
<div class="ab" style="left:0;top:245px;width:985px;height:19px;background:#ffffff"></div>
<div class="ab" style="left:0;top:264px;width:985px;height:1px;background:#dcdcdc"></div>
<div class="ab" style="left:25px;top:245px;width:1px;height:19px;background:#dcdcdc"></div>
<div class="ab" style="left:51px;top:245px;width:1px;height:19px;background:#dcdcdc"></div>
<div class="ab" style="left:122px;top:245px;width:1px;height:19px;background:#dcdcdc"></div>
<div class="ab" style="left:153px;top:245px;width:1px;height:19px;background:#dcdcdc"></div>
<div class="ab" style="left:204px;top:245px;width:1px;height:19px;background:#dcdcdc"></div>
<div class="ab" style="left:325px;top:245px;width:1px;height:19px;background:#dcdcdc"></div>
<div class="ab" style="left:481px;top:245px;width:1px;height:19px;background:#dcdcdc"></div>
<div class="ab" style="left:802px;top:245px;width:1px;height:19px;background:#dcdcdc"></div>
<div class="ab" style="left:893px;top:245px;width:1px;height:19px;background:#dcdcdc"></div>
<div class="cb cbc" style="left:6px;top:248px"><svg width="13" height="13" viewBox="0 0 13 13" style="position:absolute;left:0;top:0"><path d="M3.2 6.8 L5.5 9 L10 4.2" fill="none" stroke="#f4f8ff" stroke-width="0.9"/></svg></div>
<div class="cb cbc" style="left:28px;top:246px"><svg width="13" height="13" viewBox="0 0 13 13" style="position:absolute;left:0;top:0"><path d="M3.2 6.8 L5.5 9 L10 4.2" fill="none" stroke="#f4f8ff" stroke-width="0.9"/></svg></div>
<div class="cell" style="left:52px;top:249px;width:70px;padding-left:2px">02/12/2024</div>
<div class="cell" style="left:123px;top:249px;width:30px;padding-left:2px">TRB</div>
<div class="cell" style="left:154px;top:249px;width:50px;padding-right:2px;text-align:right">1871</div>
<div class="cell" style="left:205px;top:249px;width:120px;padding-left:2px">Transferencias Bancarias</div>
<div class="cell" style="left:326px;top:249px;width:155px;padding-left:3px">AILYN LETICIA CANTARERO</div>
<div class="cell" style="left:482px;top:249px;width:320px;padding-left:3px">Pago De Ii Quincena Nov. 2024</div>
<div class="cell" style="left:803px;top:249px;width:90px;padding-right:2px;text-align:right">7,500.00</div>
<div class="cell" style="left:894px;top:249px;width:90px;padding-right:2px;text-align:right">0.00</div>
<div class="ab" style="left:0;top:265px;width:985px;height:19px;background:#ffffff"></div>
<div class="ab" style="left:0;top:284px;width:985px;height:1px;background:#dcdcdc"></div>
<div class="ab" style="left:25px;top:265px;width:1px;height:19px;background:#dcdcdc"></div>
<div class="ab" style="left:51px;top:265px;width:1px;height:19px;background:#dcdcdc"></div>
<div class="ab" style="left:122px;top:265px;width:1px;height:19px;background:#dcdcdc"></div>
<div class="ab" style="left:153px;top:265px;width:1px;height:19px;background:#dcdcdc"></div>
<div class="ab" style="left:204px;top:265px;width:1px;height:19px;background:#dcdcdc"></div>
<div class="ab" style="left:325px;top:265px;width:1px;height:19px;background:#dcdcdc"></div>
<div class="ab" style="left:481px;top:265px;width:1px;height:19px;background:#dcdcdc"></div>
<div class="ab" style="left:802px;top:265px;width:1px;height:19px;background:#dcdcdc"></div>
<div class="ab" style="left:893px;top:265px;width:1px;height:19px;background:#dcdcdc"></div>
<div class="cb cbc" style="left:6px;top:268px"><svg width="13" height="13" viewBox="0 0 13 13" style="position:absolute;left:0;top:0"><path d="M3.2 6.8 L5.5 9 L10 4.2" fill="none" stroke="#f4f8ff" stroke-width="0.9"/></svg></div>
<div class="cb cbc" style="left:28px;top:266px"><svg width="13" height="13" viewBox="0 0 13 13" style="position:absolute;left:0;top:0"><path d="M3.2 6.8 L5.5 9 L10 4.2" fill="none" stroke="#f4f8ff" stroke-width="0.9"/></svg></div>
<div class="cell" style="left:52px;top:269px;width:70px;padding-left:2px">02/12/2024</div>
<div class="cell" style="left:123px;top:269px;width:30px;padding-left:2px">TRB</div>
<div class="cell" style="left:154px;top:269px;width:50px;padding-right:2px;text-align:right">1872</div>
<div class="cell" style="left:205px;top:269px;width:120px;padding-left:2px">Transferencias Bancarias</div>
<div class="cell" style="left:326px;top:269px;width:155px;padding-left:3px">MAICOL JOHN MIRALDA</div>
<div class="cell" style="left:482px;top:269px;width:320px;padding-left:3px">Pago De Ii Quinncena Nov. 2024</div>
<div class="cell" style="left:803px;top:269px;width:90px;padding-right:2px;text-align:right">5,621.30</div>
<div class="cell" style="left:894px;top:269px;width:90px;padding-right:2px;text-align:right">0.00</div>
<div class="ab" style="left:0;top:285px;width:985px;height:19px;background:#ffffff"></div>
<div class="ab" style="left:0;top:304px;width:985px;height:1px;background:#dcdcdc"></div>
<div class="ab" style="left:25px;top:285px;width:1px;height:19px;background:#dcdcdc"></div>
<div class="ab" style="left:51px;top:285px;width:1px;height:19px;background:#dcdcdc"></div>
<div class="ab" style="left:122px;top:285px;width:1px;height:19px;background:#dcdcdc"></div>
<div class="ab" style="left:153px;top:285px;width:1px;height:19px;background:#dcdcdc"></div>
<div class="ab" style="left:204px;top:285px;width:1px;height:19px;background:#dcdcdc"></div>
<div class="ab" style="left:325px;top:285px;width:1px;height:19px;background:#dcdcdc"></div>
<div class="ab" style="left:481px;top:285px;width:1px;height:19px;background:#dcdcdc"></div>
<div class="ab" style="left:802px;top:285px;width:1px;height:19px;background:#dcdcdc"></div>
<div class="ab" style="left:893px;top:285px;width:1px;height:19px;background:#dcdcdc"></div>
<div class="cb cbc" style="left:6px;top:288px"><svg width="13" height="13" viewBox="0 0 13 13" style="position:absolute;left:0;top:0"><path d="M3.2 6.8 L5.5 9 L10 4.2" fill="none" stroke="#f4f8ff" stroke-width="0.9"/></svg></div>
<div class="cb cbc" style="left:28px;top:286px"><svg width="13" height="13" viewBox="0 0 13 13" style="position:absolute;left:0;top:0"><path d="M3.2 6.8 L5.5 9 L10 4.2" fill="none" stroke="#f4f8ff" stroke-width="0.9"/></svg></div>
<div class="cell" style="left:52px;top:289px;width:70px;padding-left:2px">02/12/2024</div>
<div class="cell" style="left:123px;top:289px;width:30px;padding-left:2px">TRB</div>
<div class="cell" style="left:154px;top:289px;width:50px;padding-right:2px;text-align:right">1875</div>
<div class="cell" style="left:205px;top:289px;width:120px;padding-left:2px">Transferencias Bancarias</div>
<div class="cell" style="left:326px;top:289px;width:155px;padding-left:3px">ERENESTO ROJAS</div>
<div class="cell" style="left:482px;top:289px;width:320px;padding-left:3px">Pago De Publicidad  Diciembre  2024</div>
<div class="cell" style="left:803px;top:289px;width:90px;padding-right:2px;text-align:right">3,000.00</div>
<div class="cell" style="left:894px;top:289px;width:90px;padding-right:2px;text-align:right">0.00</div>
<div class="ab" style="left:0;top:305px;width:985px;height:19px;background:#ffffff"></div>
<div class="ab" style="left:0;top:324px;width:985px;height:1px;background:#dcdcdc"></div>
<div class="ab" style="left:25px;top:305px;width:1px;height:19px;background:#dcdcdc"></div>
<div class="ab" style="left:51px;top:305px;width:1px;height:19px;background:#dcdcdc"></div>
<div class="ab" style="left:122px;top:305px;width:1px;height:19px;background:#dcdcdc"></div>
<div class="ab" style="left:153px;top:305px;width:1px;height:19px;background:#dcdcdc"></div>
<div class="ab" style="left:204px;top:305px;width:1px;height:19px;background:#dcdcdc"></div>
<div class="ab" style="left:325px;top:305px;width:1px;height:19px;background:#dcdcdc"></div>
<div class="ab" style="left:481px;top:305px;width:1px;height:19px;background:#dcdcdc"></div>
<div class="ab" style="left:802px;top:305px;width:1px;height:19px;background:#dcdcdc"></div>
<div class="ab" style="left:893px;top:305px;width:1px;height:19px;background:#dcdcdc"></div>
<div class="cb cbc" style="left:6px;top:308px"><svg width="13" height="13" viewBox="0 0 13 13" style="position:absolute;left:0;top:0"><path d="M3.2 6.8 L5.5 9 L10 4.2" fill="none" stroke="#f4f8ff" stroke-width="0.9"/></svg></div>
<div class="cb cbc" style="left:28px;top:306px"><svg width="13" height="13" viewBox="0 0 13 13" style="position:absolute;left:0;top:0"><path d="M3.2 6.8 L5.5 9 L10 4.2" fill="none" stroke="#f4f8ff" stroke-width="0.9"/></svg></div>
<div class="cell" style="left:52px;top:309px;width:70px;padding-left:2px">02/12/2024</div>
<div class="cell" style="left:123px;top:309px;width:30px;padding-left:2px">TRB</div>
<div class="cell" style="left:154px;top:309px;width:50px;padding-right:2px;text-align:right">1876</div>
<div class="cell" style="left:205px;top:309px;width:120px;padding-left:2px">Transferencias Bancarias</div>
<div class="cell" style="left:326px;top:309px;width:155px;padding-left:3px">CAROLINA ROGGE GOMEZ</div>
<div class="cell" style="left:482px;top:309px;width:320px;padding-left:3px">Pago Por Servicios Fulbio Cantarero</div>
<div class="cell" style="left:803px;top:309px;width:90px;padding-right:2px;text-align:right">5,600.00</div>
<div class="cell" style="left:894px;top:309px;width:90px;padding-right:2px;text-align:right">0.00</div>
<div class="ab" style="left:0;top:24px;width:985px;height:1px;background:#000"></div>
<div class="ab" style="left:0;top:25px;width:1px;height:20px;background:#1a78d6"></div>
<div class="ab" style="left:984px;top:25px;width:1px;height:20px;background:#1a78d6"></div>
<div class="ab" style="left:0;top:44px;width:985px;height:1px;background:#1a78d6"></div>
</div>
<div class="sv" style="left:93px;top:581px;text-align:left">0.00</div>
<div class="sv" style="left:800px;top:578px;width:111px">1,995,314.47</div>
<div class="sv" style="left:900px;top:578px;width:103px">2,084,192.88</div>
<div class="ab" style="left:20px;top:600px;width:775px;height:93px;border:1px solid #8e8e8e"></div>
<div class="ab" style="left:21px;top:601px;width:773px;height:1px;background:#fff"></div>
<div class="ab" style="left:21px;top:601px;width:1px;height:91px;background:#fff"></div>
<div class="sh" style="left:82px;top:608px;width:101px">Inicial</div>
<div class="sh" style="left:183px;top:608px;width:101px">Cheques</div>
<div class="sh" style="left:284px;top:608px;width:103px">Depósitos</div>
<div class="sh" style="left:387px;top:608px;width:101px">N.Crédito</div>
<div class="sh" style="left:488px;top:608px;width:102px">N. Débito</div>
<div class="sh" style="left:590px;top:608px;width:101px">Transferencias</div>
<div class="sh" style="left:691px;top:608px;width:103px">Saldos</div>
<div class="ab" style="left:21px;top:623px;width:773px;height:1px;background:#6e6e6e"></div>
<div class="ab" style="left:22px;top:624px;width:772px;height:1px;background:#fff"></div>
<div class="ab" style="left:21px;top:646px;width:773px;height:1px;background:#6e6e6e"></div>
<div class="ab" style="left:22px;top:647px;width:772px;height:1px;background:#fff"></div>
<div class="ab" style="left:21px;top:668px;width:773px;height:1px;background:#6e6e6e"></div>
<div class="ab" style="left:22px;top:669px;width:772px;height:1px;background:#fff"></div>
<div class="ab" style="left:82px;top:624px;width:1px;height:68px;background:#6e6e6e"></div>
<div class="ab" style="left:83px;top:625px;width:1px;height:67px;background:#fff"></div>
<div class="ab" style="left:183px;top:624px;width:1px;height:68px;background:#6e6e6e"></div>
<div class="ab" style="left:184px;top:625px;width:1px;height:67px;background:#fff"></div>
<div class="ab" style="left:284px;top:624px;width:1px;height:68px;background:#6e6e6e"></div>
<div class="ab" style="left:285px;top:625px;width:1px;height:67px;background:#fff"></div>
<div class="ab" style="left:387px;top:624px;width:1px;height:68px;background:#6e6e6e"></div>
<div class="ab" style="left:388px;top:625px;width:1px;height:67px;background:#fff"></div>
<div class="ab" style="left:488px;top:624px;width:1px;height:68px;background:#6e6e6e"></div>
<div class="ab" style="left:489px;top:625px;width:1px;height:67px;background:#fff"></div>
<div class="ab" style="left:590px;top:624px;width:1px;height:68px;background:#6e6e6e"></div>
<div class="ab" style="left:591px;top:625px;width:1px;height:67px;background:#fff"></div>
<div class="ab" style="left:691px;top:624px;width:1px;height:68px;background:#6e6e6e"></div>
<div class="ab" style="left:692px;top:625px;width:1px;height:67px;background:#fff"></div>
<div class="sl" style="left:24px;top:631px">Libros</div>
<div class="sv" style="left:82px;top:631px;width:95px">53,590.73</div>
<div class="sv" style="left:183px;top:631px;width:95px">0.00</div>
<div class="sv" style="left:284px;top:631px;width:97px">2,034,192.88</div>
<div class="sv" style="left:387px;top:631px;width:95px">0.00</div>
<div class="sv" style="left:488px;top:631px;width:96px">0.00</div>
<div class="sv" style="left:590px;top:631px;width:95px">1,615,314.47</div>
<div class="sv" style="left:691px;top:631px;width:97px">472,469.14</div>
<div class="sl" style="left:24px;top:653px">Bancos</div>
<div class="sv" style="left:82px;top:653px;width:95px">53,590.73</div>
<div class="sv" style="left:183px;top:653px;width:95px">0.00</div>
<div class="sv" style="left:284px;top:653px;width:97px">2,034,192.88</div>
<div class="sv" style="left:387px;top:653px;width:95px">0.00</div>
<div class="sv" style="left:488px;top:653px;width:96px">0.00</div>
<div class="sv" style="left:590px;top:653px;width:95px">1,615,314.47</div>
<div class="sv" style="left:691px;top:653px;width:97px">472,469.14</div>
<div class="sl" style="left:24px;top:678px">Diferencia</div>
<div class="sv" style="left:82px;top:678px;width:95px">0.00</div>
<div class="sv" style="left:183px;top:678px;width:95px">0.00</div>
<div class="sv" style="left:284px;top:678px;width:97px">0.00</div>
<div class="sv" style="left:387px;top:678px;width:95px">0.00</div>
<div class="sv" style="left:488px;top:678px;width:96px">0.00</div>
<div class="sv" style="left:590px;top:678px;width:95px">0.00</div>
<div class="sv" style="left:691px;top:678px;width:97px">0.00</div>
<div class="ab" style="left:798px;top:601px;width:82px;height:28px;border:1px solid #c9c9c9;border-radius:4px;background:#fbfbfb"></div>
<svg class="ab" style="left:805px;top:605px" width="20" height="20" viewBox="0 0 20 20">
<circle cx="10" cy="10" r="8.2" fill="none" stroke="#6a6a6a" stroke-width="1.4"/>
<circle cx="6.2" cy="10" r="1.2" fill="#5a5a5a"/><circle cx="10" cy="10" r="1.2" fill="#5a5a5a"/><circle cx="13.8" cy="10" r="1.2" fill="#5a5a5a"/>
</svg>
<div class="lbl" style="left:837px;top:610px">Partida</div>
</body></html>
